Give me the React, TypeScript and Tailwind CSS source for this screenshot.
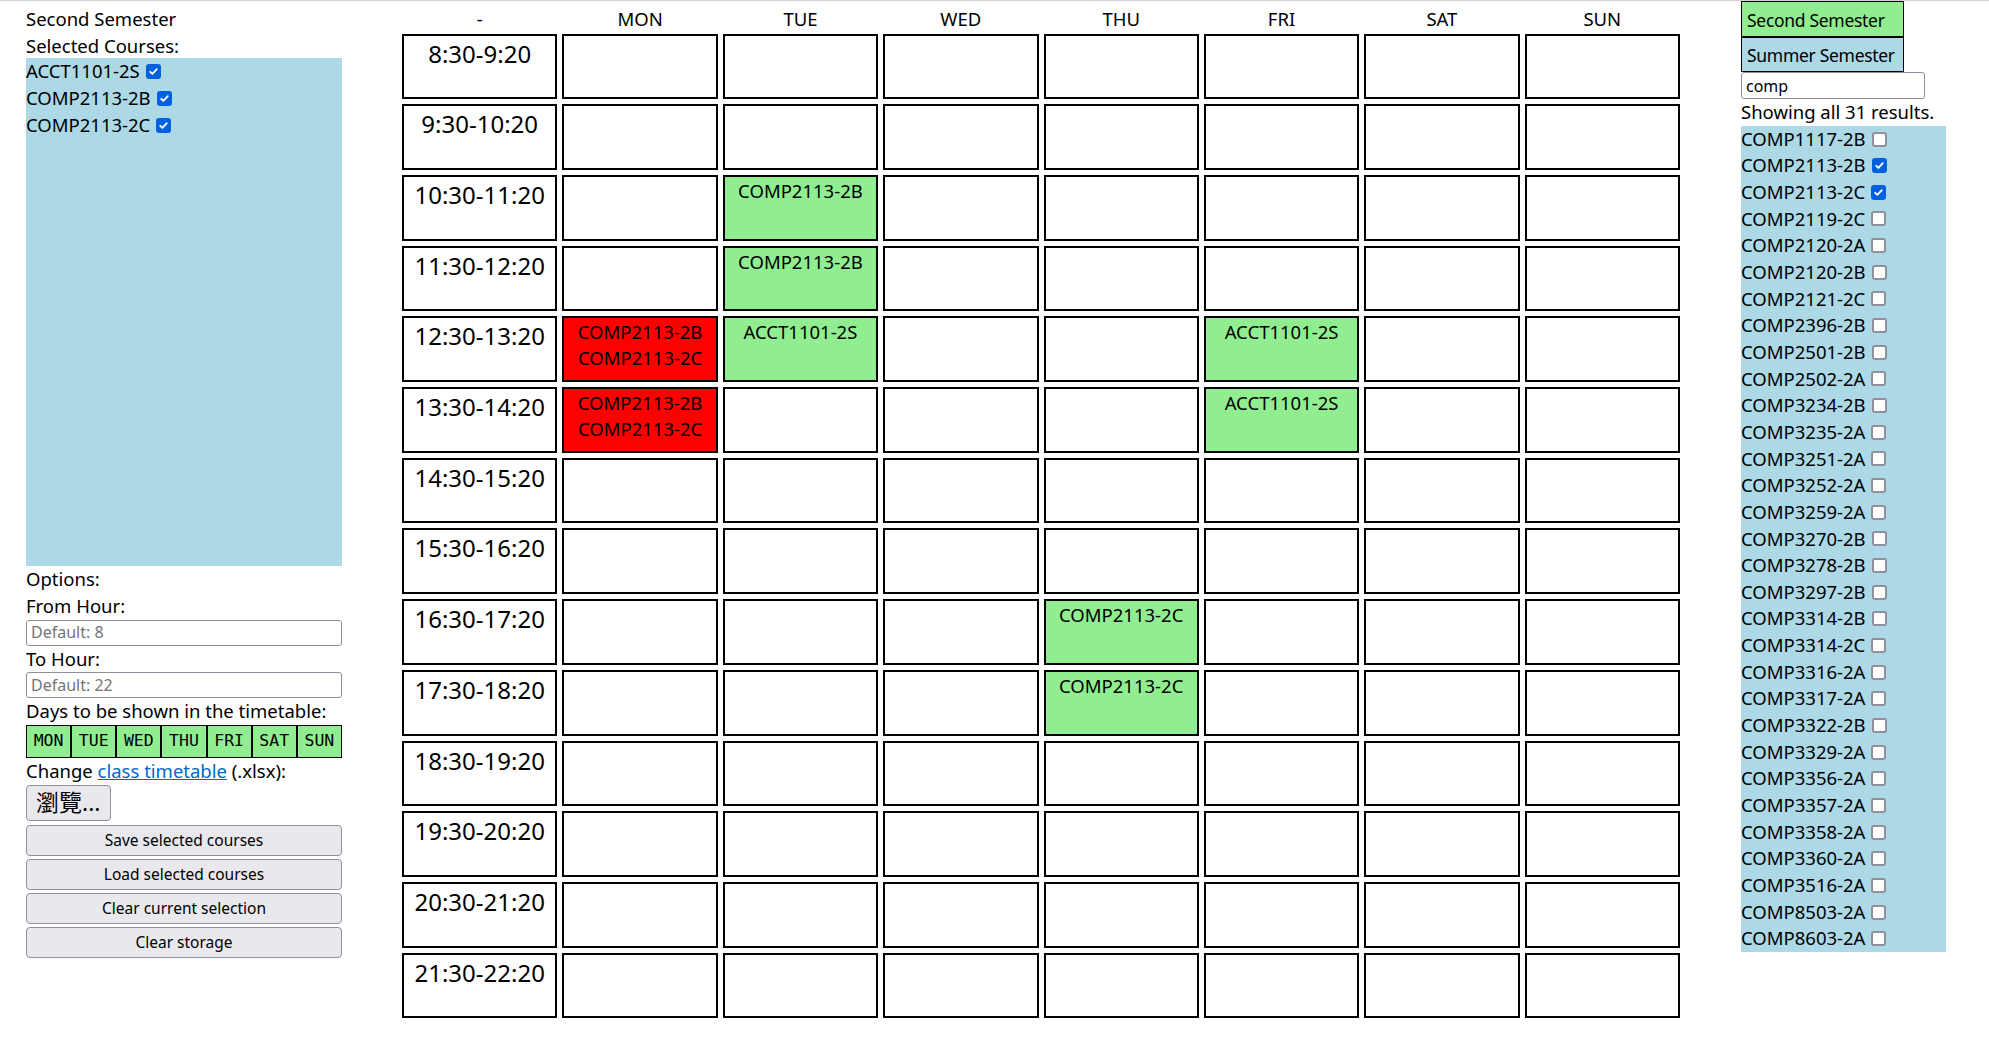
import React from "react";

const days = ["MON", "TUE", "WED", "THU", "FRI", "SAT", "SUN"];
const slots = Array.from({ length: 14 }, (_, i) => `${i + 8}:30-${i + 9}:20`);

// row-day -> courses in that slot
const schedule: Record<string, string[]> = {
  "2-1": ["COMP2113-2B"],
  "3-1": ["COMP2113-2B"],
  "4-0": ["COMP2113-2B", "COMP2113-2C"],
  "4-1": ["ACCT1101-2S"],
  "4-4": ["ACCT1101-2S"],
  "5-0": ["COMP2113-2B", "COMP2113-2C"],
  "5-4": ["ACCT1101-2S"],
  "8-3": ["COMP2113-2C"],
  "9-3": ["COMP2113-2C"],
};

const selected = ["ACCT1101-2S", "COMP2113-2B", "COMP2113-2C"];

const results = [
  "COMP1117-2B", "COMP2113-2B", "COMP2113-2C", "COMP2119-2C", "COMP2120-2A",
  "COMP2120-2B", "COMP2121-2C", "COMP2396-2B", "COMP2501-2B", "COMP2502-2A",
  "COMP3234-2B", "COMP3235-2A", "COMP3251-2A", "COMP3252-2A", "COMP3259-2A",
  "COMP3270-2B", "COMP3278-2B", "COMP3297-2B", "COMP3314-2B", "COMP3314-2C",
  "COMP3316-2A", "COMP3317-2A", "COMP3322-2B", "COMP3329-2A", "COMP3356-2A",
  "COMP3357-2A", "COMP3358-2A", "COMP3360-2A", "COMP3516-2A", "COMP8503-2A",
  "COMP8603-2A",
];

const Check = ({ on }: { on?: boolean }) =>
  on ? (
    <span className="ml-[6px] inline-flex h-[15px] w-[15px] items-center justify-center rounded-[3px] bg-[#0060df]">
      <svg viewBox="0 0 12 12" className="h-[11px] w-[11px]">
        <path d="M2.4 6.3l2.4 2.4 4.8-5.2" fill="none" stroke="white" strokeWidth="2" strokeLinecap="round" strokeLinejoin="round" />
      </svg>
    </span>
  ) : (
    <span className="ml-[6px] inline-block h-[15px] w-[15px] rounded-[3px] border-2 border-[#8f8f9d] bg-white" />
  );

const Cell = ({ row, day }: { row: number; day: number }) => {
  const list = schedule[`${row}-${day}`];
  const bg = !list ? "bg-white" : list.length > 1 ? "bg-[#ff0000]" : "bg-[#90ee90]";
  return (
    <div className={`border-2 border-black ${bg} pt-[1px] text-center text-[18.5px] leading-[26px]`}>
      {list?.map((c) => (
        <div key={c}>{c}</div>
      ))}
    </div>
  );
};

const GreyButton = ({ label }: { label: string }) => (
  <button className="h-[31px] w-full rounded-[4px] border border-[#8f8f9d] bg-[#e9e9ed] text-[15.5px] text-black">
    {label}
  </button>
);

const App = () => {
  return (
    <div className="min-h-screen border-t border-[#d4d4d4] bg-white font-['Noto_Sans',sans-serif] text-black">
      <div className="flex items-start">
        {/* left panel */}
        <div className="ml-[26px] w-[316px] pt-[4px] text-[18.5px] leading-[26.67px]">
          <div className="pt-[1px]">Second Semester</div>
          <div className="-mb-[1px]">Selected Courses:</div>
          <div className="h-[508px] bg-[#add8e6]">
            {selected.map((c) => (
              <div key={c} className="flex items-center">
                {c}
                <Check on />
              </div>
            ))}
          </div>
          <div>Options:</div>
          <div>From Hour:</div>
          <input
            className="block h-[26px] w-full rounded-[3px] border border-[#8f8f9d] px-[4px] text-[16px] placeholder:text-[#757575]"
            placeholder="Default: 8"
          />
          <div>To Hour:</div>
          <input
            className="block h-[26px] w-full rounded-[3px] border border-[#8f8f9d] px-[4px] text-[16px] placeholder:text-[#757575]"
            placeholder="Default: 22"
          />
          <div>Days to be shown in the timetable:</div>
          <div className="grid h-[33px] grid-cols-7">
            {days.map((d) => (
              <div
                key={d}
                className="flex items-center justify-center border border-black bg-[#90ee90] font-['DejaVu_Sans_Mono',monospace] text-[16.5px]"
              >
                {d}
              </div>
            ))}
          </div>
          <div>
            Change <span className="text-[#0066cc] underline">class timetable</span> (.xlsx):
          </div>
          <button className="h-[36px] rounded-[4px] border border-[#8f8f9d] bg-[#e9e9ed] px-[9px] font-['Noto_Sans','Noto_Sans_CJK_TC',sans-serif] text-[23px] leading-none">
            瀏覽...
          </button>
          <div className="mt-[4px] flex flex-col gap-[3px]">
            <GreyButton label="Save selected courses" />
            <GreyButton label="Load selected courses" />
            <GreyButton label="Clear current selection" />
            <GreyButton label="Clear storage" />
          </div>
        </div>

        {/* timetable */}
        <div className="ml-[60px] w-[1278px] pt-[5px]">
          <div className="grid h-[26.67px] grid-cols-8 gap-x-[5px] text-center text-[18.5px] leading-[26.67px]">
            <div>-</div>
            {days.map((d) => (
              <div key={d}>{d}</div>
            ))}
          </div>
          <div className="mt-[1px] grid auto-rows-[65.7px] grid-cols-8 gap-[5px]">
            {slots.map((s, r) => (
              <React.Fragment key={s}>
                <div className="border-2 border-black pt-[2px] text-center text-[24px] leading-[32px]">{s}</div>
                {days.map((d, i) => (
                  <Cell key={d} row={r} day={i} />
                ))}
              </React.Fragment>
            ))}
          </div>
        </div>

        {/* right panel */}
        <div className="ml-[61px] text-[18.5px] leading-[26.67px]">
          <div className="h-[36px] w-[163px] whitespace-nowrap border border-black bg-[#90ee90] px-[5px] pt-[5px] text-[17.5px] tracking-[-0.3px]">
            Second Semester
          </div>
          <div className="h-[35px] w-[163px] whitespace-nowrap border border-black bg-[#add8e6] px-[5px] pt-[4px] text-[17.5px] tracking-[-0.3px]">
            Summer Semester
          </div>
          <input
            className="block h-[27px] w-[184px] rounded-[3px] border border-[#8f8f9d] px-[4px] text-[16px]"
            defaultValue="comp"
          />
          <div>Showing all 31 results.</div>
          <div className="w-[205px] bg-[#add8e6]">
            {results.map((c, i) => (
              <div key={c} className="flex h-[26.67px] items-center">
                {c}
                <Check on={i === 1 || i === 2} />
              </div>
            ))}
          </div>
        </div>
      </div>
    </div>
  );
};

export default App;
